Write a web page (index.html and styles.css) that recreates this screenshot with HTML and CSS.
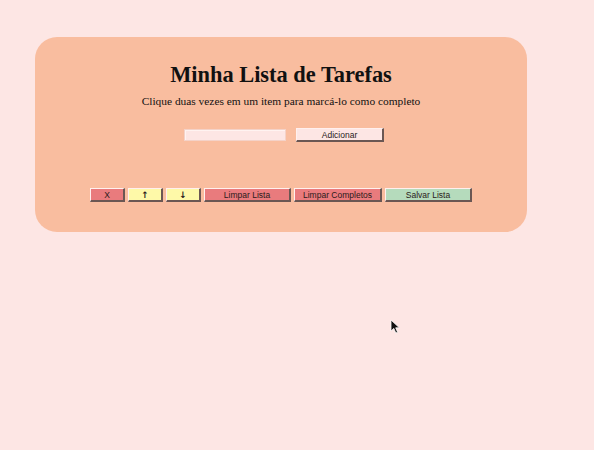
FILE: index.html
```html
<!DOCTYPE html>
<html lang="pt">
<head>
<meta charset="utf-8">
<title>Minha Lista de Tarefas</title>
<link rel="stylesheet" href="styles.css">
</head>
<body>
<main class="card">
  <h1 class="title">Minha Lista de Tarefas</h1>
  <p class="subtitle">Clique duas vezes em um item para marcá-lo como completo</p>
  <div class="entry">
    <input class="task-input" type="text">
    <button class="btn btn-add">Adicionar</button>
  </div>
  <ul class="list"></ul>
  <div class="actions">
    <button class="btn btn-red btn-small">X</button>
    <button class="btn btn-yellow btn-small arrow">&#8593;</button>
    <button class="btn btn-yellow btn-small arrow">&#8595;</button>
    <button class="btn btn-red btn-wide">Limpar Lista</button>
    <button class="btn btn-red btn-wide2">Limpar Completos</button>
    <button class="btn btn-green btn-wide">Salvar Lista</button>
  </div>
</main>
<svg class="cursor" width="12" height="16" viewBox="0 0 12 16" aria-hidden="true">
  <path d="M1 1 L1 12 L3.8 9.4 L5.8 14 L7.6 13.2 L5.7 8.8 L9.4 8.8 Z" fill="#111" stroke="#fff" stroke-width="0.8"/>
</svg>
</body>
</html>
```

FILE: styles.css
```css
html, body {
  margin: 0;
  padding: 0;
}

body {
  background: #fde6e4;
  width: 594px;
  height: 450px;
  font-family: "Liberation Serif", "Times New Roman", serif;
  color: #111;
  position: relative;
  overflow: hidden;
}

.card {
  margin: 37px 0 0 35px;
  width: 492px;
  height: 195px;
  box-sizing: border-box;
  background: #f9bd9f;
  border-radius: 22px;
  padding-top: 23px;
  display: flex;
  flex-direction: column;
  align-items: center;
}

.title {
  margin: 0;
  font-size: 22.4px;
  line-height: 30px;
  font-weight: bold;
}

.subtitle {
  margin: 4px 0 0;
  font-size: 11.4px;
  line-height: 14px;
}

.entry {
  margin: 20px 0 0 6px;
  display: flex;
  align-items: center;
  gap: 10px;
}

.task-input {
  margin: 0;
  width: 102px;
  height: 12px;
  box-sizing: border-box;
  border: 1px solid #f4d2c8;
  box-shadow: inset 1px 1px 0 #fff3f1;
  background: #fde6e4;
  padding: 0;
}

.list {
  margin: 0;
  padding: 0;
  height: 46px;
}

.btn {
  margin: 0;
  padding: 0;
  height: 14px;
  box-sizing: border-box;
  font-family: "Liberation Sans", Arial, sans-serif;
  font-size: 8.5px;
  line-height: 10px;
  color: #2a1a1a;
  border-style: solid;
  border-width: 1px 2px 2px 1px;
  border-color: #fff0ee #6b5753 #6b5753 #fff0ee;
}

.btn-add {
  width: 88px;
  height: 14px;
  background: #fde6e4;
}

.actions {
  display: flex;
  gap: 3px;
}

.btn-small { width: 35px; }
.btn-wide { width: 87px; }
.btn-wide2 { width: 88px; }

.actions .btn-wide:first-of-type { margin-left: 1px; }

.btn-red { background: #e97b7d; }
.btn-yellow { background: #fef9a8; }
.btn-green { background: #b5dbbc; }

.arrow {
  font-family: "DejaVu Sans", sans-serif;
  font-weight: bold;
  font-size: 9px;
}

.cursor {
  position: absolute;
  left: 390px;
  top: 319px;
}
```
